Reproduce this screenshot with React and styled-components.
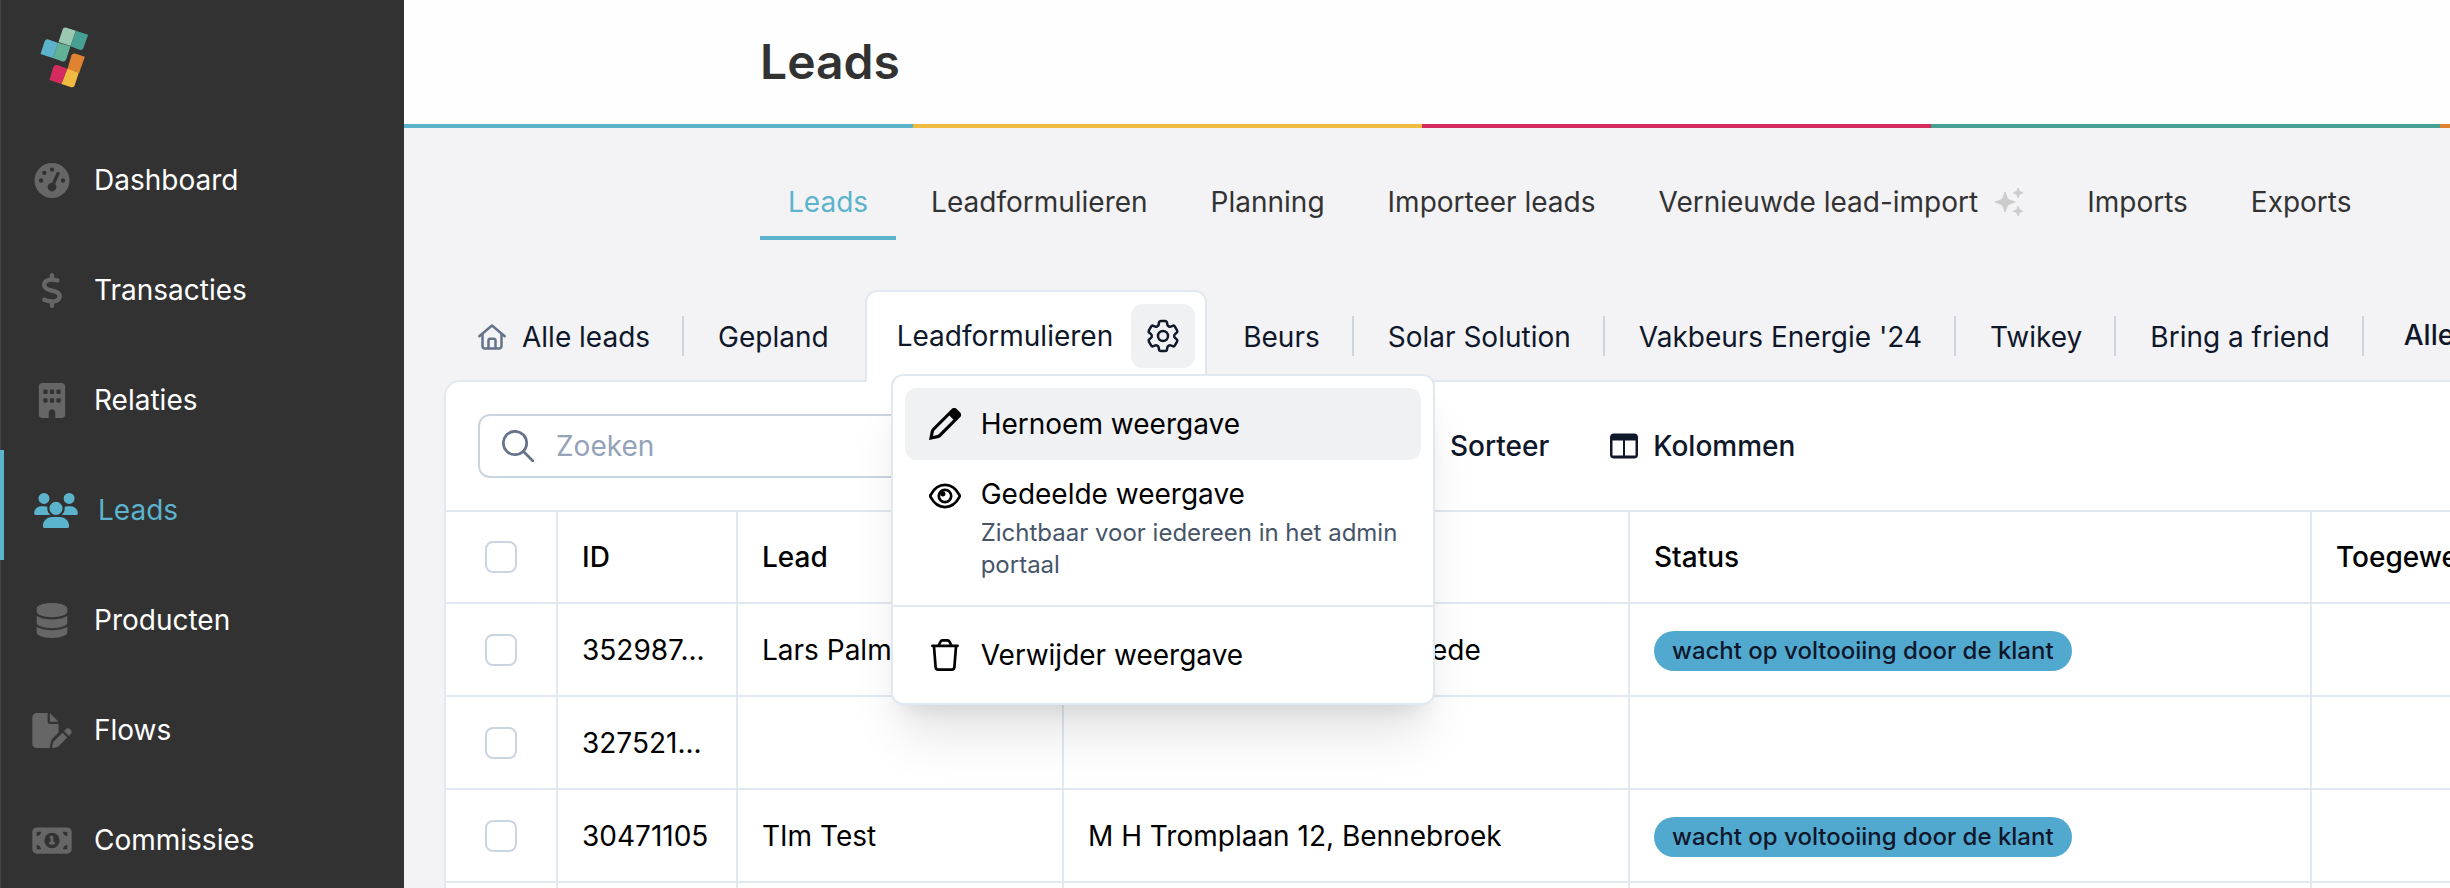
import { useState } from "react";
import styled, { createGlobalStyle } from "styled-components";
import {
  FaBuilding,
  FaDatabase,
  FaDollarSign,
  FaFilePen,
  FaGaugeHigh,
  FaMoneyBill1,
  FaUsers,
} from "react-icons/fa6";
import { HiOutlineCog6Tooth } from "react-icons/hi2";

const GlobalStyle = createGlobalStyle`
  *, *::before, *::after {
    box-sizing: border-box;
  }
  body {
    margin: 0;
    overflow: hidden;
    font-family: Inter, "Liberation Sans", sans-serif;
    font-size: 28px;
    line-height: 40px;
    color: #000;
    background: #f3f3f5;
  }
  button, input {
    font: inherit;
    color: inherit;
  }
  button {
    padding: 0;
    border: 0;
    background: none;
    cursor: pointer;
  }
  a {
    color: inherit;
    text-decoration: none;
  }
  svg {
    display: block;
    flex-shrink: 0;
  }
`;

const Layout = styled.div`
  display: flex;
  height: 100vh;
  overflow: hidden;
`;

/* sidebar */
const Sidebar = styled.aside`
  flex: 0 0 404px;
  background: #323232;
  box-shadow: inset 1px 0 #444;
`;

const LogoLink = styled.a`
  display: block;
  height: 120px;
  padding: 27px 40px;
`;

const SideLink = styled.a`
  display: flex;
  align-items: center;
  gap: 20px;
  height: 110px;
  padding: 10px 30px 0;
  color: ${({ $active }) => ($active ? "#5bb4cc" : "#fff")};
  border-left: ${({ $active }) => ($active ? "4px solid #5bb4cc" : "0")};
`;

const SideIcon = styled.span`
  color: ${({ $active }) => ($active ? "#5bb4cc" : "#666")};

  svg {
    width: 44px;
    height: 35px;
  }
`;

/* page head */
const Main = styled.main`
  flex: 1;
  min-width: 0;
  display: flex;
  flex-direction: column;
`;

const Header = styled.header`
  display: flex;
  align-items: center;
  height: 124px;
  padding-left: 356px;
  background: #fefefe;
`;

const Title = styled.h1`
  margin: 0;
  font-size: 48px;
  line-height: 60px;
  font-weight: 600;
  color: #323232;
`;

const Stripe = styled.div`
  display: flex;
  height: 4px;
  overflow: hidden;
`;

const StripePart = styled.span`
  flex: 0 0 509px;
  background: ${({ $color }) => $color};
`;

const Nav = styled.nav`
  display: flex;
  gap: 7px;
  padding: 36px 0 50px 356px;
  white-space: nowrap;
`;

const NavLink = styled.a`
  display: flex;
  align-items: center;
  gap: 16px;
  padding: 18px 28px 14px;
  color: ${({ $active }) => ($active ? "#5bb4cc" : "#323232")};
  border-bottom: 4px solid ${({ $active }) => ($active ? "#5bb4cc" : "transparent")};
`;

/* saved views */
const Views = styled.div`
  position: relative;
  z-index: 1;
  display: flex;
  align-items: flex-end;
  margin: 0 0 -2px 40px;
  white-space: nowrap;
  color: #0f172a;
`;

const View = styled.button`
  display: flex;
  align-items: center;
  gap: 16px;
  height: 92px;
  padding: ${({ $strong }) => ($strong ? "0 32px 2px 40px" : "2px 32px 0 34px")};
  font-weight: ${({ $strong }) => ($strong ? 500 : 400)};
`;

const Divider = styled.span`
  flex: 0 0 2px;
  height: 40px;
  margin-bottom: 26px;
  background: ${({ $hidden }) => ($hidden ? "transparent" : "#cbd5e1")};
`;

const ActiveView = styled.div`
  position: relative;
  display: flex;
  align-items: center;
  gap: 18px;
  height: 92px;
  margin: 0 2px;
  padding: 0 10px 2px 30px;
  background: #fff;
  border: 2px solid #e2e8f0;
  border-bottom: 0;
  border-radius: 12px 12px 0 0;
`;

const GearButton = styled.button`
  display: grid;
  place-items: center;
  width: 64px;
  height: 64px;
  border-radius: 12px;
  background: #eff1f3;
`;

const Menu = styled.div`
  position: absolute;
  top: 82px;
  left: 24px;
  width: 544px;
  background: #fff;
  border: 2px solid #e2e8f0;
  border-radius: 12px;
  box-shadow: 0 40px 50px -10px rgba(0, 0, 0, 0.1), 0 16px 20px -12px rgba(0, 0, 0, 0.1);
  color: #000;
  white-space: normal;
`;

const MenuGroup = styled.div`
  padding: 12px 12px ${({ $last }) => ($last ? "12px" : "8px")};

  & + & {
    border-top: 2px solid #e2e8f0;
  }
`;

const MenuItem = styled.button`
  display: flex;
  align-items: flex-start;
  gap: 20px;
  width: 100%;
  padding: 16px 16px 16px 24px;
  border-radius: 12px;
  background: ${({ $hover }) => ($hover ? "#eff1f3" : "transparent")};
  text-align: left;

  svg {
    margin-top: 4px;
  }
`;

const MenuLabel = styled.span`
  display: block;
  line-height: ${({ $tight }) => ($tight ? "36px" : "40px")};
`;

const MenuHint = styled.span`
  display: block;
  margin-top: 5px;
  font-size: 24px;
  line-height: 32px;
  color: #475569;
`;

/* panel */
const Panel = styled.section`
  flex: 1;
  margin-left: 40px;
  background: #fff;
  border: 2px solid #e2e8f0;
  border-width: 2px 0 0 2px;
  border-radius: 16px 0 0 0;
  overflow: hidden;
`;

const Toolbar = styled.div`
  display: flex;
  align-items: center;
  gap: 61px;
  padding: 32px;
  border-bottom: 2px solid #e2e8f0;
`;

const SearchBox = styled.label`
  flex: 0 1 868px;
  display: flex;
  align-items: center;
  gap: 22px;
  height: 64px;
  padding: 0 22px;
  border: 2px solid #cbd5e1;
  border-radius: 12px;
`;

const SearchInput = styled.input`
  flex: 1;
  min-width: 0;
  padding: 0;
  border: 0;
  outline: 0;
  background: none;

  &::placeholder {
    color: #94a3b8;
    opacity: 1;
  }
`;

const ToolButton = styled.button`
  display: flex;
  align-items: center;
  gap: 15px;
  font-weight: 500;
  color: #0f172a;
`;

const Table = styled.table`
  width: 100%;
  table-layout: fixed;
  border-collapse: separate;
  border-spacing: 0;
  white-space: nowrap;
`;

const Col = styled.col`
  width: ${({ $width }) => $width};
`;

const cell = `
  padding: 0 24px;
  text-align: left;
  overflow: hidden;
  border-right: 2px solid #e2e8f0;
  border-bottom: 2px solid #e2e8f0;

  &:last-child {
    border-right: 0;
  }
`;

const Th = styled.th`
  ${cell}
  height: 92px;
  font-weight: 500;
`;

const Td = styled.td`
  ${cell}
  height: 93px;
`;

const Checkbox = styled.input`
  appearance: none;
  display: block;
  width: 32px;
  height: 32px;
  margin: 0 auto;
  border: 2px solid #cbd5e1;
  border-radius: 8px;
  background: #fff;

  &:checked {
    background: #5bb4cc;
  }
`;

const Badge = styled.span`
  display: inline-block;
  padding: 0 18px;
  border-radius: 20px;
  background: #52a9d0;
  color: #0f172a;
  font-size: 24px;
  font-weight: 500;
  vertical-align: middle;
`;

const Logo = () => (
  <svg width="49" height="61" viewBox="120 83 146 183" role="img" aria-label="Logo">
    <path fill="#9bc8b0" d="M227 94L211 140L175 128L187 91Q190 82 199 85Z" />
    <path fill="#48a094" d="M227 94L264 106L250 145Q247 154 238 151L211 141Z" />
    <path fill="#5bb4cc" d="M174 131L158 176L121 164L133 127Q137 117 147 121Z" />
    <path fill="#61b196" d="M174 130L211 141L198 180Q194 189 185 186L158 176Z" />
    <path fill="#e08330" d="M254 172L237 221L202 209L214 168Q218 160 227 163Z" />
    <path fill="#d52c5f" d="M202 208L184 254L148 242L159 204Q164 194 173 198Z" />
    <path fill="#f1bb41" d="M202 208L236 220L223 259Q219 266 211 263L184 254Z" />
  </svg>
);

const HomeIcon = () => (
  <svg width="28" height="26" viewBox="0 0 28 26" fill="none" stroke="#64748b" strokeWidth="2.5" strokeLinecap="round" strokeLinejoin="round">
    <path d="M1.3 12.2L14 1.5L26.7 12.2" />
    <path d="M4.5 10.5V22a2.5 2.5 0 0 0 2.5 2.5h14a2.5 2.5 0 0 0 2.5-2.5V10.5" />
    <path d="M10.5 24V16.500a1.800 1.800 0 0 1 1.800-1.800h3.400a1.800 1.800 0 0 1 1.800 1.800V24" />
  </svg>
);

const SparkleIcon = () => (
  <svg width="30" height="30" viewBox="0.500 0.500 23 23" fill="#ccc" stroke="#ccc" strokeWidth="0.700" strokeLinejoin="round">
    <path d="M9 4.200L10.700 8.800Q11.200 9.900 12.300 10.400L16.800 12L12.300 13.700Q11.200 14.100 10.700 15.200L9 19.800L7.300 15.200Q6.800 14.100 5.700 13.700L1.200 12L5.700 10.400Q6.800 9.900 7.300 8.800Z" />
    <path d="M19 1.300L20.100 3.900L22.700 5L20.100 6.100L19 8.700L17.900 6.100L15.300 5L17.900 3.900Z" />
    <path d="M19 15.300L20.100 17.900L22.700 19L20.100 20.100L19 22.700L17.900 20.100L15.300 19L17.900 17.900Z" />
  </svg>
);

const PencilIcon = () => (
  <svg width="32" height="32" viewBox="0 0 32 32">
    <path
      fillRule="evenodd"
      d="M22.400 1.200a4 4 0 0 1 5.600 0l2.800 2.800a4 4 0 0 1 0 5.600L12 28.400a6 6 0 0 1-3.400 1.900L0 32L1.700 23.400A6 6 0 0 1 3.400 20.200ZM20.400 7.600L5.700 22.300a3 3 0 0 0-.8 1.500L3.900 28.100L8.200 27.100a3 3 0 0 0 1.500-.8L24.400 11.600Z"
    />
  </svg>
);

const EyeIcon = () => (
  <svg width="32" height="32" viewBox="0 0 32 32" fill="none" stroke="currentColor" strokeWidth="2.700">
    <path d="M1.700 17.200Q1 16 1.700 14.800C5 8.500 10 4.900 16 4.900S27 8.500 30.300 14.800Q31 16 30.300 17.200C27 23.500 22 27.100 16 27.100S5 23.500 1.700 17.200Z" />
    <circle cx="16" cy="16" r="6.200" />
    <circle cx="13.800" cy="13.800" r="2.600" fill="currentColor" stroke="none" />
  </svg>
);

const TrashIcon = () => (
  <svg width="32" height="32" viewBox="0 0 32 32" fill="none" stroke="currentColor" strokeWidth="2.700" strokeLinecap="round" strokeLinejoin="round">
    <path d="M3.400 6.800H28.600" />
    <path d="M9.800 6.300L11.300 3Q12 1.400 13.700 1.400H18.300Q20 1.400 20.700 3L22.200 6.300" />
    <path d="M5 7.500L6.600 28.200Q6.800 30.600 9.200 30.600H22.800Q25.200 30.600 25.400 28.200L27 7.500" />
  </svg>
);

const SearchIcon = () => (
  <svg width="32" height="32" viewBox="0 0 32 32" fill="none" stroke="#64748b" strokeWidth="2.700" strokeLinecap="round">
    <circle cx="13" cy="13" r="11.700" />
    <path d="M21.500 21.500L30.700 30.700" />
  </svg>
);

const SortIcon = () => (
  <svg width="28" height="28" viewBox="0 0 28 28" fill="none" stroke="currentColor" strokeWidth="2.500" strokeLinecap="round" strokeLinejoin="round">
    <path d="M8 4V24M3 9L8 4L13 9M20 24V4M15 19L20 24L25 19" />
  </svg>
);

const ColumnsIcon = () => (
  <svg width="28" height="26" viewBox="0 0 28 26">
    <path
      fill="currentColor"
      fillRule="evenodd"
      d="M4 0.500H24a4 4 0 0 1 4 4V21.500a4 4 0 0 1-4 4H4a4 4 0 0 1-4-4V4.500a4 4 0 0 1 4-4ZM2.500 7.500V22.500H13V7.500ZM15 7.500V22.500H25.500V7.500Z"
    />
  </svg>
);

const sideItems = [
  { label: "Dashboard", Icon: FaGaugeHigh },
  { label: "Transacties", Icon: FaDollarSign },
  { label: "Relaties", Icon: FaBuilding },
  { label: "Leads", Icon: FaUsers, active: true },
  { label: "Producten", Icon: FaDatabase },
  { label: "Flows", Icon: FaFilePen },
  { label: "Commissies", Icon: FaMoneyBill1 },
];

const stripeColors = ["#5bb4cc", "#f1bb41", "#d52c5f", "#48a094", "#e08330"];

const navItems = [
  "Leads",
  "Leadformulieren",
  "Planning",
  "Importeer leads",
  "Vernieuwde lead-import",
  "Imports",
  "Exports",
];

const views = ["Beurs", "Solar Solution", "Vakbeurs Energie '24", "Twikey", "Bring a friend"];

const rows = [
  { id: "352987...", lead: "Lars Palm", address: "Dorpsstraat 1288, Heemstede", status: true },
  { id: "327521..." },
  { id: "30471105", lead: "TIm Test", address: "M H Tromplaan 12, Bennebroek", status: true },
  { id: "" },
];

const ViewMenu = () => (
  <Menu role="menu">
    <MenuGroup>
      <MenuItem role="menuitem" $hover>
        <PencilIcon />
        <MenuLabel>Hernoem weergave</MenuLabel>
      </MenuItem>
      <MenuItem role="menuitem">
        <EyeIcon />
        <span>
          <MenuLabel $tight>Gedeelde weergave</MenuLabel>
          <MenuHint>Zichtbaar voor iedereen in het admin portaal</MenuHint>
        </span>
      </MenuItem>
    </MenuGroup>
    <MenuGroup $last>
      <MenuItem role="menuitem">
        <TrashIcon />
        <MenuLabel>Verwijder weergave</MenuLabel>
      </MenuItem>
    </MenuGroup>
  </Menu>
);

const LeadsTable = () => (
  <Table>
    <colgroup>
      <Col $width="112px" />
      <Col $width="180px" />
      <Col $width="326px" />
      <Col $width="566px" />
      <Col $width="682px" />
      <Col $width="auto" />
    </colgroup>
    <thead>
      <tr>
        <Th>
          <Checkbox type="checkbox" aria-label="Selecteer alles" />
        </Th>
        <Th>ID</Th>
        <Th>Lead</Th>
        <Th aria-label="Adres" />
        <Th>Status</Th>
        <Th>Toegewezen</Th>
      </tr>
    </thead>
    <tbody>
      {rows.map((row, i) => (
        <tr key={i}>
          <Td>
            <Checkbox type="checkbox" aria-label={`Selecteer ${row.id}`} />
          </Td>
          <Td>{row.id}</Td>
          <Td>{row.lead}</Td>
          <Td>{row.address}</Td>
          <Td>{row.status && <Badge>wacht op voltooiing door de klant</Badge>}</Td>
          <Td />
        </tr>
      ))}
    </tbody>
  </Table>
);

const App = () => {
  const [search, setSearch] = useState("");
  const [menuOpen, setMenuOpen] = useState(true);

  return (
    <Layout>
      <GlobalStyle />
      <Sidebar>
        <LogoLink href="#">
          <Logo />
        </LogoLink>
        <nav>
          {sideItems.map(({ label, Icon, active }) => (
            <SideLink key={label} href="#" $active={active}>
              <SideIcon $active={active}>
                <Icon />
              </SideIcon>
              {label}
            </SideLink>
          ))}
        </nav>
      </Sidebar>
      <Main>
        <Header>
          <Title>Leads</Title>
        </Header>
        <Stripe>
          {stripeColors.map((color) => (
            <StripePart key={color} $color={color} />
          ))}
        </Stripe>
        <Nav>
          {navItems.map((item) => (
            <NavLink key={item} href="#" $active={item === "Leads"}>
              {item}
              {item === "Vernieuwde lead-import" && <SparkleIcon />}
            </NavLink>
          ))}
        </Nav>
        <Views>
          <View>
            <HomeIcon />
            Alle leads
          </View>
          <Divider />
          <View>Gepland</View>
          <Divider $hidden />
          <ActiveView>
            Leadformulieren
            <GearButton aria-label="Instellingen" onClick={() => setMenuOpen(!menuOpen)}>
              <HiOutlineCog6Tooth size={40} />
            </GearButton>
            {menuOpen && <ViewMenu />}
          </ActiveView>
          {views.map((view) => [
            <View key={view}>{view}</View>,
            <Divider key={`${view}-divider`} />,
          ])}
          <View $strong>Alle</View>
        </Views>
        <Panel>
          <Toolbar>
            <SearchBox>
              <SearchIcon />
              <SearchInput
                placeholder="Zoeken"
                aria-label="Zoeken"
                value={search}
                onChange={(e) => setSearch(e.target.value)}
              />
            </SearchBox>
            <ToolButton>
              <SortIcon />
              Sorteer
            </ToolButton>
            <ToolButton>
              <ColumnsIcon />
              Kolommen
            </ToolButton>
          </Toolbar>
          <LeadsTable />
        </Panel>
      </Main>
    </Layout>
  );
};

export default App;
